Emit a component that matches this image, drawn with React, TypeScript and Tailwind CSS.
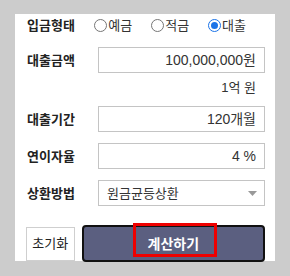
import React from "react";

const font = { fontFamily: '"Liberation Sans", "Noto Sans CJK KR", sans-serif' };

function Radio({ label, checked }: { label: string; checked?: boolean }) {
  return (
    <label className="flex items-center w-[60px] h-full">
      <span
        className={
          checked
            ? "w-[13px] h-[13px] rounded-full border-[1px] border-[#1a73e8] flex items-center justify-center shrink-0"
            : "w-[13px] h-[13px] rounded-full border-[1px] border-[#767676] shrink-0"
        }
      >
        {checked && <span className="w-[7px] h-[7px] rounded-full bg-[#1a73e8]" />}
      </span>
      <span className="ml-[1px] text-[13px] leading-none text-[#333]">{label}</span>
    </label>
  );
}

function Field({ label, value }: { label: string; value: string }) {
  return (
    <div className="flex items-center h-[26px]">
      <div className="w-[71px] text-[13px] font-bold text-[#222] leading-none">{label}</div>
      <div className="w-[167px] h-[26px] border border-[#c4c4c4] flex items-center justify-end pr-[8px] text-[14px] text-[#333] leading-none">
        {value}
      </div>
    </div>
  );
}

export default function App() {
  return (
    <div className="w-[290px] h-[276px] bg-[#cccccc] pt-[14px] pl-[15px]" style={font}>
      <div className="w-[260px] h-[247px] bg-white pl-[12px] pr-[10px]">
        <div className="flex items-center h-[23px]">
          <div className="w-[71px] text-[13px] font-bold text-[#222] leading-none">입금형태</div>
          <Radio label="예금" />
          <Radio label="적금" />
          <Radio label="대출" checked />
        </div>
        <div className="mt-[10px]">
          <Field label="대출금액" value="100,000,000원" />
        </div>
        <div className="mt-[6px] h-[16px] flex items-center justify-end pr-[9px] text-[13px] text-[#333] leading-none">
          1억 원
        </div>
        <div className="mt-[11px]">
          <Field label="대출기간" value="120개월" />
        </div>
        <div className="mt-[11px]">
          <Field label="연이자율" value="4 %" />
        </div>
        <div className="mt-[11px] flex items-center h-[26px]">
          <div className="w-[71px] text-[13px] font-bold text-[#222] leading-none">상환방법</div>
          <div className="w-[167px] h-[26px] border border-[#c4c4c4] flex items-center justify-between pl-[8px] pr-[7px] text-[13px] text-[#333] leading-none">
            <span>원금균등상환</span>
            <svg width="9" height="5" viewBox="0 0 9 5">
              <path d="M0 0 L9 0 L4.5 5 Z" fill="#999" />
            </svg>
          </div>
        </div>
        <div className="mt-[19px] flex items-center h-[37px] -ml-[1px]">
          <div className="w-[49px] h-[34px] border border-[#cfcfcf] bg-white flex items-center justify-center text-[13px] text-[#222] leading-none">
            초기화
          </div>
          <div className="relative ml-[7px] w-[185px] h-[37px] bg-[#5b5f80] border-2 border-[#111] rounded-[4px] flex items-center justify-center text-white font-bold text-[14px] leading-none">
            계산하기
            <div className="absolute left-[49px] top-[-4px] w-[84px] h-[34px] border-[3px] border-[#ee0000]" />
          </div>
        </div>
      </div>
    </div>
  );
}
